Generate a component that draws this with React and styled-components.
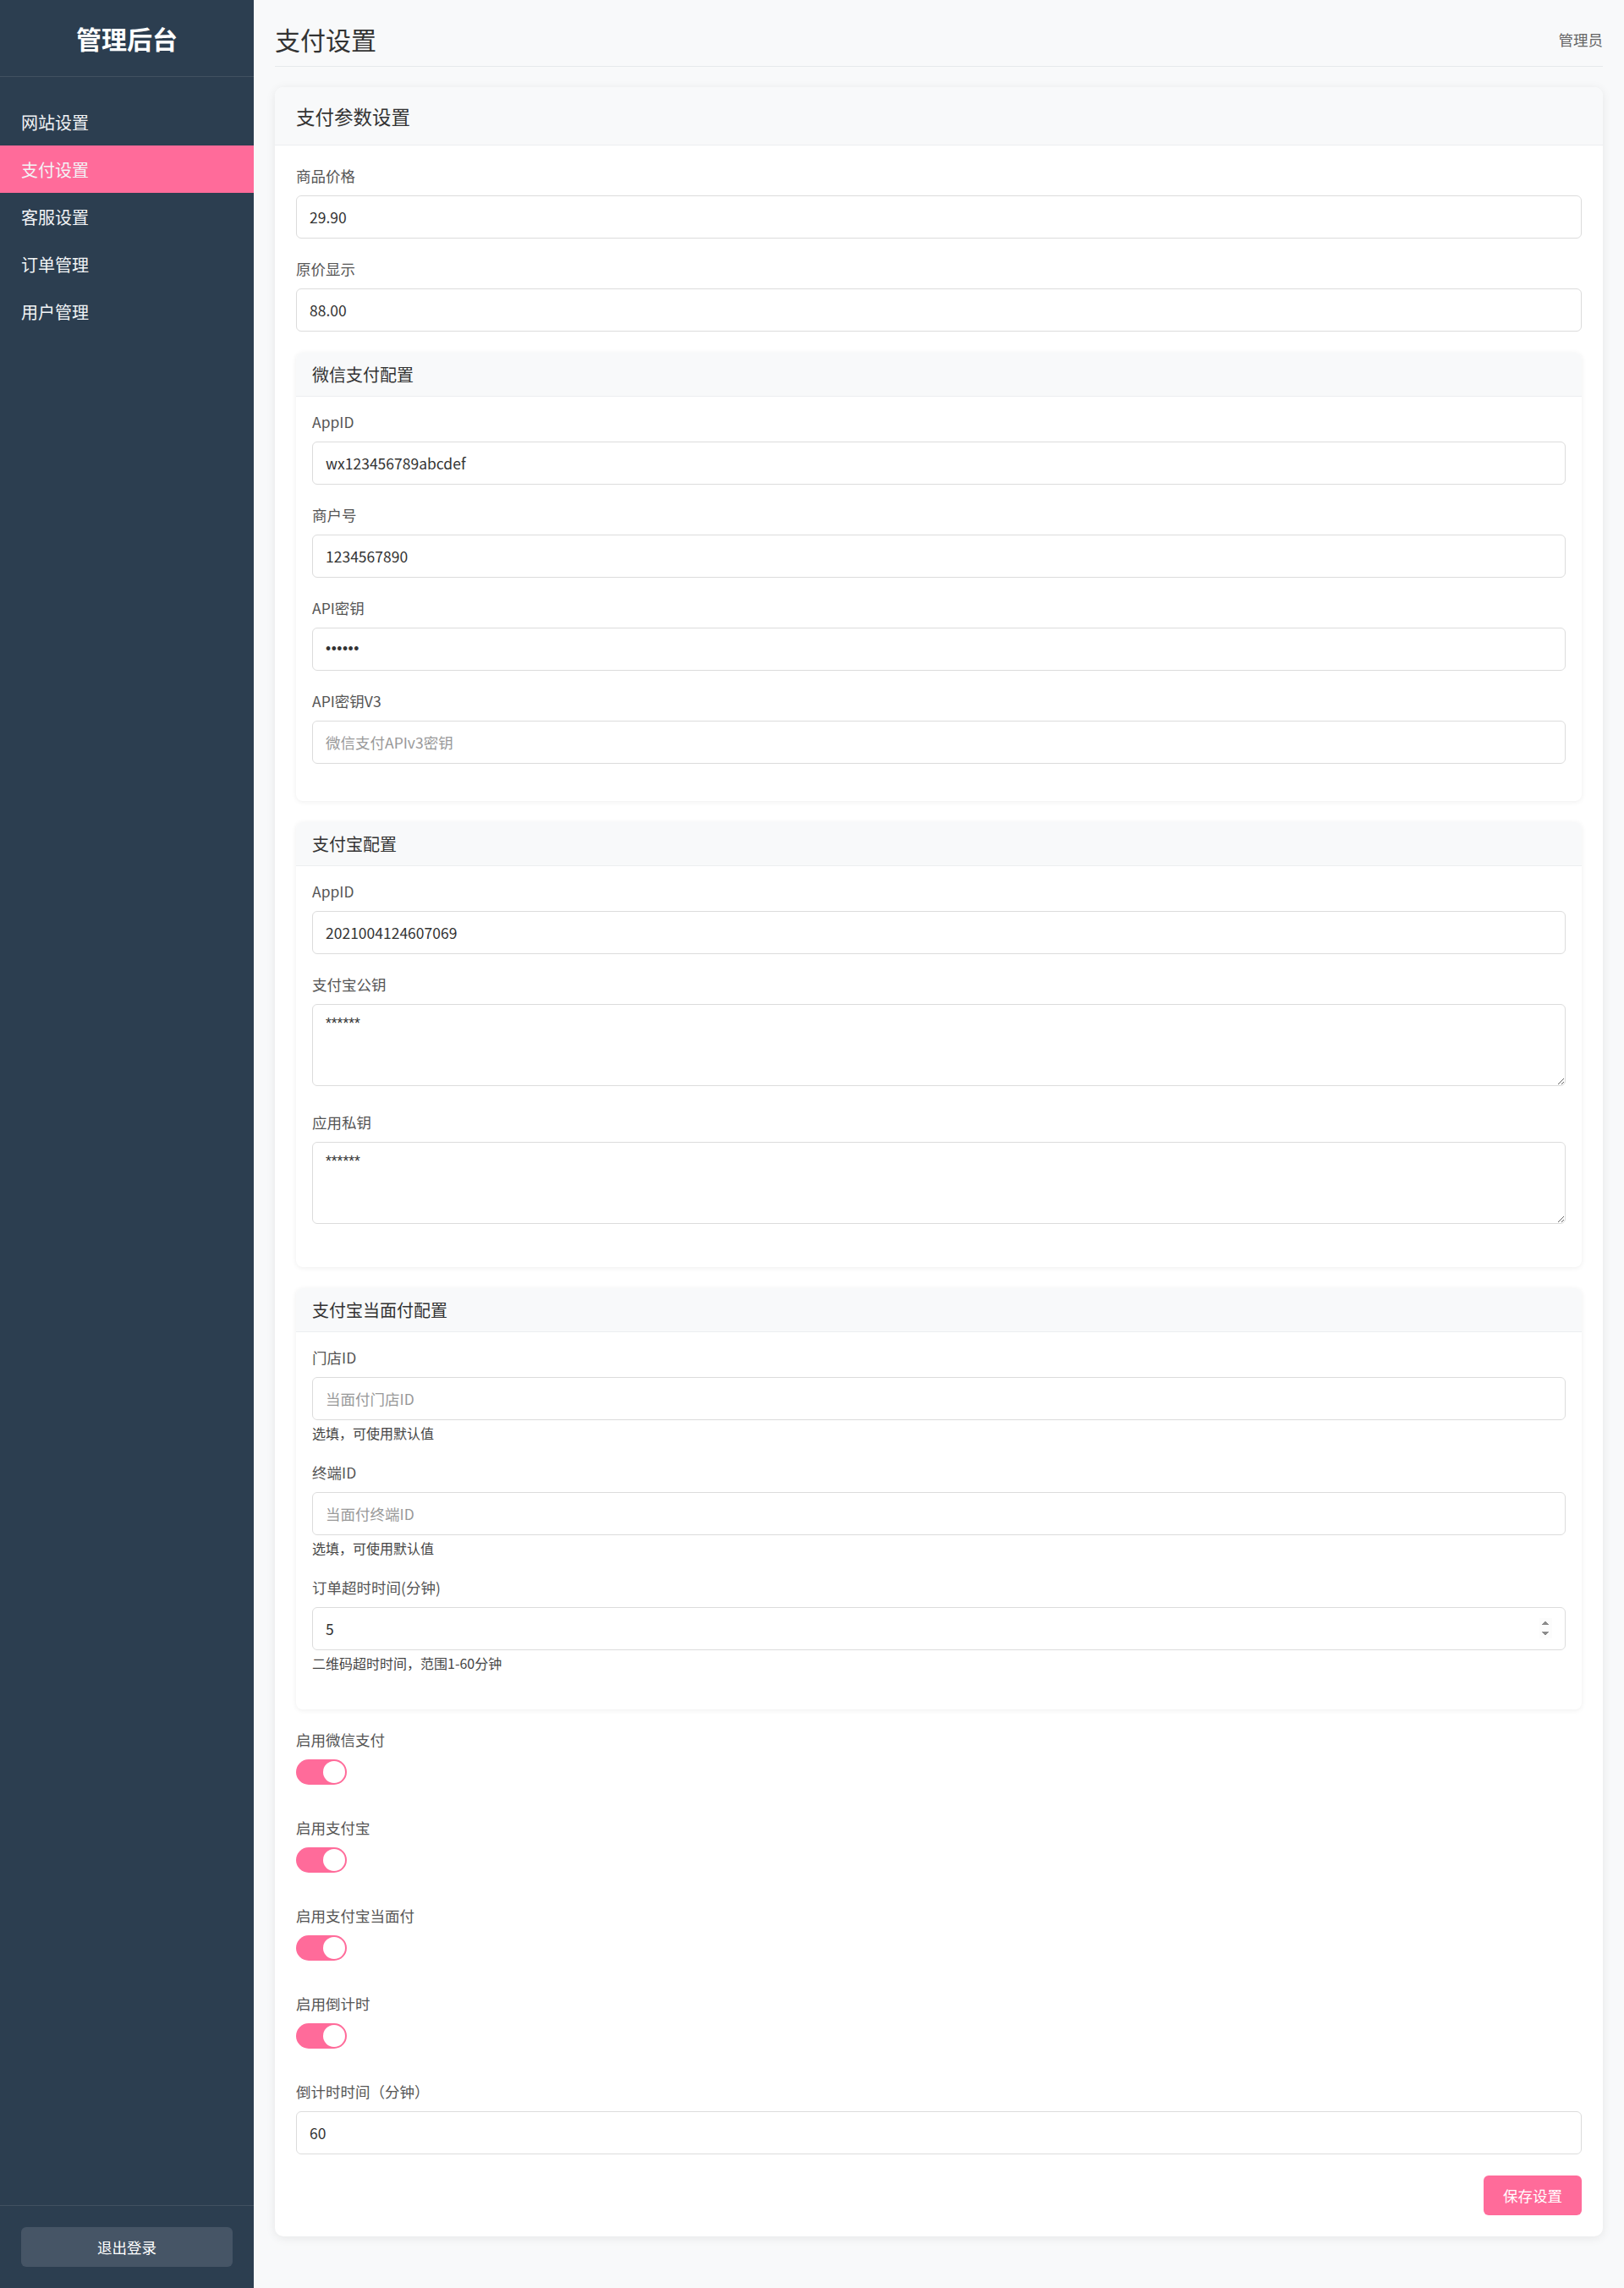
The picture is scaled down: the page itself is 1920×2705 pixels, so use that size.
import React from 'react';
import styled, { createGlobalStyle } from 'styled-components';

const PINK = '#ff6b9a';

const navItems = ['网站设置', '支付设置', '客服设置', '订单管理', '用户管理'];

export default function App() {
  return (
    <>
      <GlobalStyle />
      <Layout>
        <Sidebar>
          <Brand>管理后台</Brand>
          <Nav>
            {navItems.map((item) => (
              <NavItem key={item} $active={item === '支付设置'}>
                {item}
              </NavItem>
            ))}
          </Nav>
          <SidebarFooter>
            <LogoutButton>退出登录</LogoutButton>
          </SidebarFooter>
        </Sidebar>

        <Main>
          <TopBar>
            <PageTitle>支付设置</PageTitle>
            <UserName>管理员</UserName>
          </TopBar>

          <Card>
            <CardHeader>支付参数设置</CardHeader>
            <CardBody>
              <Field label="商品价格" value="29.90" />
              <Field label="原价显示" value="88.00" />

              <Section title="微信支付配置">
                <Field label="AppID" value="wx123456789abcdef" />
                <Field label="商户号" value="1234567890" />
                <Field label="API密钥" value="123456" type="password" />
                <Field label="API密钥V3" placeholder="微信支付APIv3密钥" />
              </Section>

              <Section title="支付宝配置">
                <Field label="AppID" value="2021004124607069" />
                <AreaField label="支付宝公钥" value="******" />
                <AreaField label="应用私钥" value="******" />
              </Section>

              <Section title="支付宝当面付配置">
                <Field label="门店ID" placeholder="当面付门店ID" help="选填，可使用默认值" />
                <Field label="终端ID" placeholder="当面付终端ID" help="选填，可使用默认值" />
                <Field
                  label="订单超时时间(分钟)"
                  value="5"
                  type="number"
                  help="二维码超时时间，范围1-60分钟"
                />
              </Section>

              <Toggle label="启用微信支付" />
              <Toggle label="启用支付宝" />
              <Toggle label="启用支付宝当面付" />
              <Toggle label="启用倒计时" />

              <Field label="倒计时时间（分钟）" value="60" />

              <Actions>
                <SaveButton>保存设置</SaveButton>
              </Actions>
            </CardBody>
          </Card>
        </Main>
      </Layout>
    </>
  );
}

function Field({ label, value, placeholder, type = 'text', help }) {
  return (
    <Group>
      <Label>{label}</Label>
      <Input type={type} defaultValue={value} placeholder={placeholder} />
      {help && <Help>{help}</Help>}
    </Group>
  );
}

function AreaField({ label, value }) {
  return (
    <Group $gap={32}>
      <Label>{label}</Label>
      <TextArea defaultValue={value} />
    </Group>
  );
}

function Section({ title, children }) {
  return (
    <SubBox>
      <SubHeader>{title}</SubHeader>
      <SubBody>{children}</SubBody>
    </SubBox>
  );
}

function Toggle({ label }) {
  return (
    <Group $gap={40}>
      <Label>{label}</Label>
      <Switch>
        <Knob />
      </Switch>
    </Group>
  );
}

const GlobalStyle = createGlobalStyle`
  * { box-sizing: border-box; }
  body {
    margin: 0;
    font-family: "Noto Sans CJK SC", "Noto Sans", sans-serif;
    background: #f8f9fa;
    color: #333;
  }
`;

const Layout = styled.div`
  display: flex;
  min-height: 100vh;
`;

const Sidebar = styled.aside`
  width: 300px;
  flex-shrink: 0;
  height: 100vh;
  position: sticky;
  top: 0;
  background: #2c3e50;
  display: flex;
  flex-direction: column;
`;

const Brand = styled.div`
  height: 91px;
  display: flex;
  align-items: center;
  justify-content: center;
  color: #fff;
  font-size: 30px;
  font-weight: 700;
  border-bottom: 1px solid rgba(255, 255, 255, 0.1);
`;

const Nav = styled.nav`
  padding-top: 25px;
  display: flex;
  flex-direction: column;
`;

const NavItem = styled.div`
  height: 56px;
  padding: 0 25px;
  display: flex;
  align-items: center;
  font-size: 20px;
  color: #f2f4f6;
  background: ${({ $active }) => ($active ? PINK : 'transparent')};
  cursor: pointer;
`;

const SidebarFooter = styled.div`
  margin-top: auto;
  padding: 25px;
  border-top: 1px solid rgba(255, 255, 255, 0.1);
`;

const LogoutButton = styled.button`
  width: 100%;
  height: 47px;
  border: none;
  border-radius: 6px;
  background: #465566;
  color: #fff;
  font-family: inherit;
  font-size: 17.5px;
  cursor: pointer;
`;

const Main = styled.main`
  flex: 1;
  padding: 25px;
`;

const TopBar = styled.header`
  display: flex;
  justify-content: space-between;
  align-items: center;
  padding-bottom: 11px;
  border-bottom: 1px solid #e6e9ec;
  margin-bottom: 24px;
`;

const PageTitle = styled.h1`
  margin: 0;
  font-size: 30px;
  font-weight: 400;
  line-height: 42px;
  color: #333;
`;

const UserName = styled.span`
  font-size: 17.5px;
  color: #666;
`;

const Card = styled.section`
  background: #fff;
  border-radius: 10px;
  box-shadow: 0 2px 12px rgba(0, 0, 0, 0.08);
  overflow: hidden;
`;

const CardHeader = styled.div`
  height: 69px;
  padding: 0 25px;
  display: flex;
  align-items: center;
  background: #f8f9fa;
  border-bottom: 1px solid #eceef0;
  font-size: 22.5px;
  color: #333;
`;

const CardBody = styled.div`
  padding: 25px;
`;

const Group = styled.div`
  margin-bottom: ${({ $gap }) => $gap || 25}px;
`;

const Label = styled.label`
  display: block;
  font-size: 17.5px;
  line-height: 22px;
  color: #555;
  margin-bottom: 12px;
`;

const Input = styled.input`
  display: block;
  width: 100%;
  height: 51px;
  padding: 0 15px;
  border: 1px solid #dcdcdc;
  border-radius: 6px;
  font-family: inherit;
  font-size: 17.5px;
  color: #333;
  background: #fff;
  outline: none;

  &[type='password'] {
    font-family: "Liberation Sans", sans-serif;
    letter-spacing: 0.5px;
  }

  &::placeholder {
    color: #999;
  }

  &::-webkit-inner-spin-button {
    opacity: 1;
  }
`;

const TextArea = styled.textarea`
  display: block;
  width: 100%;
  height: 97px;
  padding: 10px 15px;
  border: 1px solid #dcdcdc;
  border-radius: 6px;
  font-family: "Liberation Sans", "Noto Sans CJK SC", sans-serif;
  font-size: 17.5px;
  line-height: 24px;
  color: #333;
  outline: none;
`;

const Help = styled.div`
  margin-top: 5px;
  font-size: 16px;
  line-height: 21px;
  color: #444;
`;

const SubBox = styled.div`
  margin-bottom: 25px;
  background: #fff;
  border-radius: 8px;
  box-shadow: 0 1px 6px rgba(0, 0, 0, 0.07);
  overflow: hidden;
`;

const SubHeader = styled.div`
  height: 52px;
  padding: 0 19px;
  display: flex;
  align-items: center;
  background: #f8f9fa;
  border-bottom: 1px solid #eceef0;
  font-size: 20px;
  color: #333;
`;

const SubBody = styled.div`
  padding: 19px;
`;

const Switch = styled.div`
  position: relative;
  width: 60px;
  height: 30px;
  border-radius: 15px;
  background: ${PINK};
  cursor: pointer;
`;

const Knob = styled.span`
  position: absolute;
  top: 2px;
  right: 2px;
  width: 26px;
  height: 26px;
  border-radius: 50%;
  background: #fff;
`;

const Actions = styled.div`
  display: flex;
  justify-content: flex-end;
`;

const SaveButton = styled.button`
  height: 47px;
  padding: 0 23px;
  border: none;
  border-radius: 6px;
  background: ${PINK};
  color: #fff;
  font-family: inherit;
  font-size: 17.5px;
  cursor: pointer;
`;
